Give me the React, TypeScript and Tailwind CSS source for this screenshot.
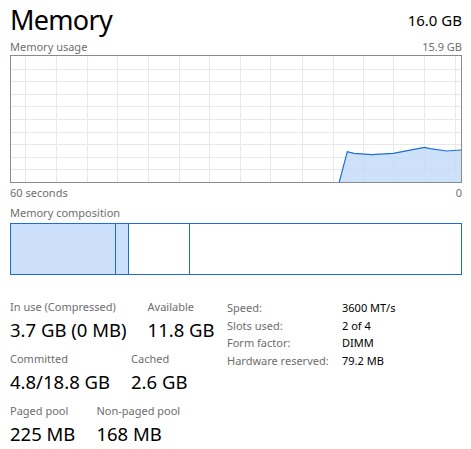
import React from "react";

const F = { fontFamily: '"Noto Sans", "Open Sans", sans-serif' };

function Chart() {
  const vx = [14, 45, 76, 106, 137, 168, 198, 229, 259, 291, 322, 352, 382, 413, 444];
  const hy = [1, 2, 3, 4, 5, 6, 7, 8, 9].map((k) => k * 12.6);
  const pts: [number, number][] = [
    [328.3, 126],
    [336.3, 95.7],
    [343, 97.3],
    [360.7, 98.7],
    [382.3, 97.3],
    [413.3, 91.3],
    [419, 92.7],
    [435.7, 95],
    [450, 94],
  ];
  const line = pts.map((p, i) => `${i ? "L" : "M"}${p[0]},${p[1]}`).join(" ");
  const area = `${line} L450,126 Z`;
  return (
    <div className="w-[452px] h-[128px] border border-[#8a8a8a]">
      <svg width="450" height="126" viewBox="0 0 450 126" className="block">
        {vx.map((x) => (
          <line key={"v" + x} x1={x + 0.5} x2={x + 0.5} y1={0} y2={126} stroke="#e8e8e8" strokeWidth={1} />
        ))}
        {hy.map((y) => (
          <line key={"h" + y} x1={0} x2={450} y1={Math.round(y) + 0.5} y2={Math.round(y) + 0.5} stroke="#e8e8e8" strokeWidth={1} />
        ))}
        <path d={area} fill="#c5dcfa" fillOpacity={0.85} />
        <path d={line} fill="none" stroke="#1a6ddb" strokeWidth={1.2} />
      </svg>
    </div>
  );
}

function Stat({ label, value }: { label: string; value: string }) {
  return (
    <div className="flex flex-col">
      <div className="text-[11px] leading-[16px] text-[#6e6e6e]">{label}</div>
      <div className="text-[18.5px] leading-[26px] text-black mt-[2px]">{value}</div>
    </div>
  );
}

export default function App() {
  return (
    <div className="w-[471px] h-[449px] bg-white pl-[10px] pr-[9px] overflow-hidden" style={F}>
      <div className="flex items-end justify-between h-[38px]">
        <div className="text-[27px] leading-[36px] tracking-[-0.7px] text-black">Memory</div>
        <div className="text-[15px] leading-[20px] text-black mb-[8px]">16.0 GB</div>
      </div>
      <div className="flex justify-between text-[11px] leading-[17px] text-[#6e6e6e]">
        <span>Memory usage</span>
        <span>15.9 GB</span>
      </div>
      <Chart />
      <div className="flex justify-between text-[11px] leading-[17px] text-[#6e6e6e] mt-[1px]">
        <span>60 seconds</span>
        <span>0</span>
      </div>
      <div className="text-[11px] leading-[17px] text-[#6e6e6e] mt-[3px]">Memory composition</div>
      <div className="mt-[2px] w-[452px] h-[52px] border border-[#1a6ddb] flex">
        <div className="w-[105px] bg-[#cce0fb] border-r border-[#1a6ddb]"></div>
        <div className="w-[13px] bg-[#cce0fb] border-r border-[#1a6ddb]"></div>
        <div className="w-[61px] border-r border-[#1a6ddb]"></div>
        <div className="flex-1"></div>
      </div>
      <div className="flex items-start mt-[24px]">
        <div className="w-[217px] flex flex-col gap-[8px]">
          <div className="flex gap-[21px]">
            <Stat label="In use (Compressed)" value="3.7 GB (0 MB)" />
            <Stat label="Available" value="11.8 GB" />
          </div>
          <div className="flex gap-[21px]">
            <Stat label="Committed" value="4.8/18.8 GB" />
            <Stat label="Cached" value="2.6 GB" />
          </div>
          <div className="flex gap-[21px]">
            <Stat label="Paged pool" value="225 MB" />
            <Stat label="Non-paged pool" value="168 MB" />
          </div>
        </div>
        <div className="grid grid-cols-[115px_1fr] content-start text-[11px] leading-[17.7px]">
          <div className="text-[#6e6e6e]">Speed:</div>
          <div className="text-black">3600 MT/s</div>
          <div className="text-[#6e6e6e]">Slots used:</div>
          <div className="text-black">2 of 4</div>
          <div className="text-[#6e6e6e]">Form factor:</div>
          <div className="text-black">DIMM</div>
          <div className="text-[#6e6e6e]">Hardware reserved:</div>
          <div className="text-black">79.2 MB</div>
        </div>
      </div>
    </div>
  );
}
